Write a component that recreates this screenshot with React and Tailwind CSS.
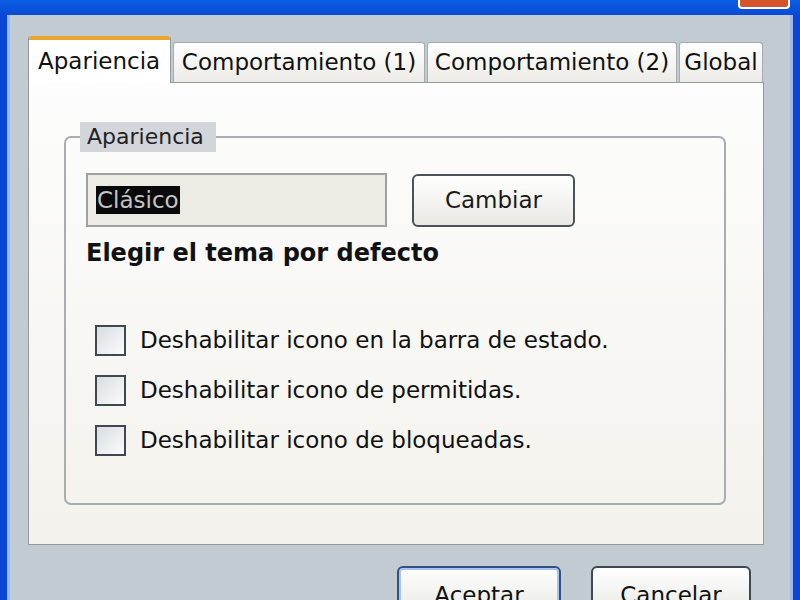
import React from 'react';

const font = { fontFamily: '"DejaVu Sans", Tahoma, Verdana, sans-serif' };

const tabs = [
  { label: 'Apariencia', w: 'w-[143px]', active: true },
  { label: 'Comportamiento (1)', w: 'w-[252px]' },
  { label: 'Comportamiento (2)', w: 'w-[250px]' },
  { label: 'Global', w: 'w-[84px]' },
];

const checks = [
  'Deshabilitar icono en la barra de estado.',
  'Deshabilitar icono de permitidas.',
  'Deshabilitar icono de bloqueadas.',
];

const Tab = ({ label, w, active }) =>
  active ? (
    <div className={`${w} h-[47px] -mb-[1px] relative z-10 flex flex-col bg-white border-x border-[#919b9c] rounded-t-[3px] overflow-hidden`}>
      <div className="h-[4px] bg-[#e9a530] shrink-0" />
      <div className="flex-1 flex items-center pl-[9px] text-[23px] text-[#111]">{label}</div>
    </div>
  ) : (
    <div className={`${w} h-[40px] flex items-center justify-center bg-gradient-to-b from-white to-[#ecebe6] border border-b-0 border-[#a3abb0] rounded-t-[3px] text-[23px] text-[#111]`}>
      {label}
    </div>
  );

const Checkbox = ({ label }) => (
  <div className="h-[50px] flex items-center">
    <div className="ml-[9px] w-[31px] h-[31px] border-2 border-[#3e4852] bg-gradient-to-br from-[#d9dde1] to-[#fbfbfb]" />
    <span className="ml-[14px] text-[23px] text-[#111]">{label}</span>
  </div>
);

export default function App() {
  return (
    <div style={font} className="w-[800px] h-[600px] overflow-hidden bg-[#0a46d6] flex flex-col">
      {/* title bar */}
      <div className="h-[15px] shrink-0 relative bg-gradient-to-b from-[#0b5fe6] to-[#0a4ad2]">
        <div className="absolute right-[10px] top-0 w-[52px] h-[9px] bg-[#d6542c] border-2 border-t-0 border-white rounded-b-[4px]" />
      </div>

      <div className="flex-1 flex mx-[7px] bg-[#9cb8ea] px-[3px]">
        <div className="flex-1 bg-[#c2cad2] pl-[18px] pr-[18px] pt-[21px] flex flex-col">
          {/* tabs */}
          <div className="flex items-end gap-[2px] h-[46px]">
            {tabs.map((t) => (
              <Tab key={t.label} {...t} />
            ))}
          </div>

          {/* panel */}
          <div className="w-[736px] h-[463px] border border-[#919b9c] bg-gradient-to-b from-[#fdfdfd] to-[#f3f2ec] pl-[35px] pt-[39px]">
            <fieldset className="w-[662px] h-[383px] border-2 border-[#a7adb1] rounded-[7px] pl-[14px] pr-0 pb-0 pt-0">
              <legend className="pl-[7px] pr-[12px] h-[30px] leading-[30px] bg-[#d2d6da] text-[22px] text-[#222]">Apariencia</legend>
              <div className="pl-[6px] pt-[21px] flex flex-col">
                <div className="flex items-center">
                  <div className="w-[301px] h-[54px] border-2 border-[#9da1a4] bg-[#ecebe4] flex items-center pl-[8px]">
                    <span className="bg-[#0a0a0a] text-[#c4c4c4] text-[23px] leading-[28px] px-[1px]">Clásico</span>
                  </div>
                  <button className="ml-[25px] w-[163px] h-[53px] rounded-[6px] border-2 border-[#4a5158] bg-gradient-to-b from-white to-[#e9e8e3] text-[23px] text-[#1a1a1a]">
                    Cambiar
                  </button>
                </div>
                <div className="mt-[11px] h-[30px] leading-[30px] text-[24px] font-bold text-[#111]">
                  Elegir el tema por defecto
                </div>
                <div className="mt-[47px] flex flex-col">
                  {checks.map((c) => (
                    <Checkbox key={c} label={c} />
                  ))}
                </div>
              </div>
            </fieldset>
          </div>

          {/* buttons */}
          <div className="mt-[21px] flex justify-end gap-[30px] pr-[21px]">
            <button className="w-[164px] h-[54px] rounded-[6px] border-2 border-[#2f4f86] bg-gradient-to-b from-white to-[#e6e6e0] shadow-[inset_0_0_0_2px_#a9c4ee] text-[23px] text-[#111] pt-[4px]">
              Aceptar
            </button>
            <button className="w-[160px] h-[54px] rounded-[6px] border-2 border-[#3e4852] bg-gradient-to-b from-white to-[#e6e6e0] text-[23px] text-[#111] pt-[4px]">
              Cancelar
            </button>
          </div>
        </div>
      </div>
    </div>
  );
}
